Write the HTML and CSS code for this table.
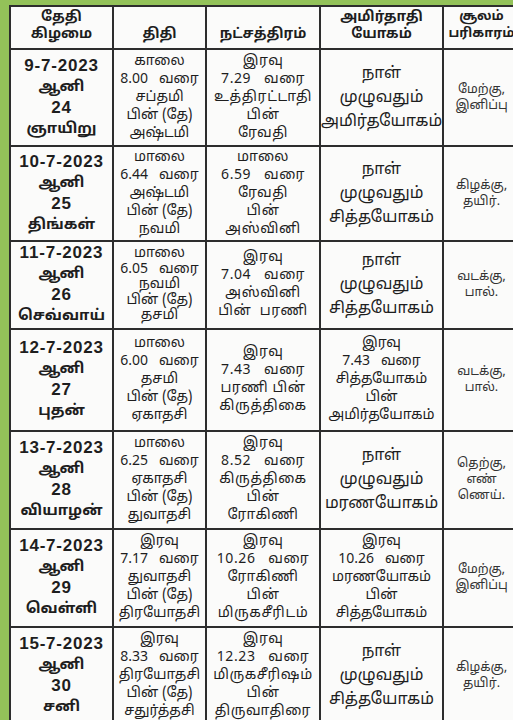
FILE: index.html
```html
<!DOCTYPE html>
<html lang="ta">
<head>
<meta charset="utf-8">
<link rel="stylesheet" href="styles.css">
</head>
<body>
<div class="page">
<table class="cal">
<colgroup>
<col class="c1"><col class="c2"><col class="c3"><col class="c4"><col class="c5">
</colgroup>
<thead>
<tr class="hd">
<th>தேதி<br>கிழமை</th>
<th>திதி</th>
<th>நட்சத்திரம்</th>
<th>அமிர்தாதி<br>யோகம்</th>
<th class="sm">சூலம்<br>பரிகாரம்</th>
</tr>
</thead>
<tbody>
<tr class="r1">
<td class="date"><span class="num">9-7-2023</span><br>ஆனி<br><span class="num">24</span><br>ஞாயிறு</td>
<td>காலை<br>8.00&nbsp;&nbsp; வரை<br>சப்தமி<br>பின் (தே)<br>அஷ்டமி</td>
<td class="nak">இரவு<br>7.29&nbsp;&nbsp; வரை<br>உத்திரட்டாதி<br>பின்<br>ரேவதி</td>
<td class="yog">நாள்<br>முழுவதும்<br>அமிர்தயோகம்</td>
<td class="par">மேற்கு,<br>இனிப்பு</td>
</tr>
<tr class="r2">
<td class="date"><span class="num">10-7-2023</span><br>ஆனி<br><span class="num">25</span><br>திங்கள்</td>
<td>மாலை<br>6.44&nbsp;&nbsp; வரை<br>அஷ்டமி<br>பின் (தே)<br>நவமி</td>
<td class="nak">மாலை<br>6.59&nbsp;&nbsp; வரை<br>ரேவதி<br>பின்<br>அஸ்வினி</td>
<td class="yog">நாள்<br>முழுவதும்<br>சித்தயோகம்</td>
<td class="par">கிழக்கு,<br>தயிர்.</td>
</tr>
<tr class="r3">
<td class="date"><span class="num">11-7-2023</span><br>ஆனி<br><span class="num">26</span><br>செவ்வாய்</td>
<td>மாலை<br>6.05&nbsp;&nbsp; வரை<br>நவமி<br>பின் (தே)<br>தசமி</td>
<td class="nak">இரவு<br>7.04&nbsp;&nbsp; வரை<br>அஸ்வினி<br>பின்&nbsp; பரணி</td>
<td class="yog">நாள்<br>முழுவதும்<br>சித்தயோகம்</td>
<td class="par">வடக்கு,<br>பால்.</td>
</tr>
<tr class="r4">
<td class="date"><span class="num">12-7-2023</span><br>ஆனி<br><span class="num">27</span><br>புதன்</td>
<td>மாலை<br>6.00&nbsp;&nbsp; வரை<br>தசமி<br>பின் (தே)<br>ஏகாதசி</td>
<td class="nak">இரவு<br>7.43&nbsp;&nbsp; வரை<br>பரணி பின்<br>கிருத்திகை</td>
<td class="yog2">இரவு<br>7.43&nbsp;&nbsp; வரை<br>சித்தயோகம்<br>பின்<br>அமிர்தயோகம்</td>
<td class="par">வடக்கு,<br>பால்.</td>
</tr>
<tr class="r5">
<td class="date"><span class="num">13-7-2023</span><br>ஆனி<br><span class="num">28</span><br>வியாழன்</td>
<td>மாலை<br>6.25&nbsp;&nbsp; வரை<br>ஏகாதசி<br>பின் (தே)<br>துவாதசி</td>
<td class="nak">இரவு<br>8.52&nbsp;&nbsp; வரை<br>கிருத்திகை<br>பின்<br>ரோகிணி</td>
<td class="yog">நாள்<br>முழுவதும்<br>மரணயோகம்</td>
<td class="par">தெற்கு,<br>எண்<br>ணெய்.</td>
</tr>
<tr class="r6">
<td class="date"><span class="num">14-7-2023</span><br>ஆனி<br><span class="num">29</span><br>வெள்ளி</td>
<td>இரவு<br>7.17&nbsp;&nbsp; வரை<br>துவாதசி<br>பின் (தே)<br>திரயோதசி</td>
<td class="nak">இரவு<br>10.26&nbsp;&nbsp; வரை<br>ரோகிணி<br>பின்<br>மிருகசீரிடம்</td>
<td class="yog2">இரவு<br>10.26&nbsp;&nbsp; வரை<br>மரணயோகம்<br>பின்<br>சித்தயோகம்</td>
<td class="par">மேற்கு,<br>இனிப்பு</td>
</tr>
<tr class="r7">
<td class="date"><span class="num">15-7-2023</span><br>ஆனி<br><span class="num">30</span><br>சனி</td>
<td>இரவு<br>8.33&nbsp;&nbsp; வரை<br>திரயோதசி<br>பின் (தே)<br>சதுர்த்தசி</td>
<td class="nak">இரவு<br>12.23&nbsp;&nbsp; வரை<br>மிருகசீரிஷம்<br>பின்<br>திருவாதிரை</td>
<td class="yog">நாள்<br>முழுவதும்<br>சித்தயோகம்</td>
<td class="par">கிழக்கு,<br>தயிர்.</td>
</tr>
</tbody>
</table>
</div>
</body>
</html>
```
FILE: styles.css
```css
html, body {
  margin: 0;
  padding: 0;
  background: #93c259;
  width: 513px;
  height: 720px;
  overflow: hidden;
}
.page {
  padding: 5px 0 0 9px;
  width: 520px;
}
.cal {
  border-collapse: collapse;
  table-layout: fixed;
  width: 510px;
  background: #fbfbfa;
  color: #1e1e1e;
  font-family: "Noto Sans Tamil", "Lohit Tamil", "Noto Sans", "Liberation Sans", sans-serif;
}
.c1 { width: 103px; }
.c2 { width: 93px; }
.c3 { width: 114px; }
.c4 { width: 123px; }
.c5 { width: 77px; }
.cal th, .cal td {
  border: 2px solid #2d2d2d;
  text-align: center;
  padding: 0;
  overflow: hidden;
  white-space: nowrap;
}
.cal th {
  font-size: 14px;
  line-height: 17px;
  font-weight: 700;
  vertical-align: bottom;
  padding-bottom: 5px;
}
.cal th.sm { font-size: 13px; }
.hd { height: 43px; }
.cal td {
  font-size: 14px;
  line-height: 18px;
  vertical-align: middle;
}
.cal td.nak {
  letter-spacing: 0.6px;
}
.cal td.date {
  font-size: 15px;
  line-height: 20px;
  font-weight: 700;
}
.date .num {
  font-family: "Liberation Sans", Arial, sans-serif;
  font-size: 17px;
  letter-spacing: 0.8px;
}
.cal td.yog {
  font-size: 16px;
  line-height: 24px;
}
.cal td.yog2 {
  font-size: 14px;
  line-height: 18px;
}
.cal td.par {
  font-size: 12.5px;
  line-height: 16px;
  color: #333;
}
.r3 td { line-height: 15.5px; }
.r3 td.nak { line-height: 18px; }
.r3 td.date { line-height: 20px; }
.r3 td.yog { line-height: 24px; }
.r3 td.par { line-height: 16px; }
.r1 { height: 97px; }
.r2 { height: 95px; }
.r3 { height: 88px; }
.r4 { height: 102px; }
.r5 { height: 98px; }
.r6 { height: 98px; }
.r7 { height: 98px; }
```
